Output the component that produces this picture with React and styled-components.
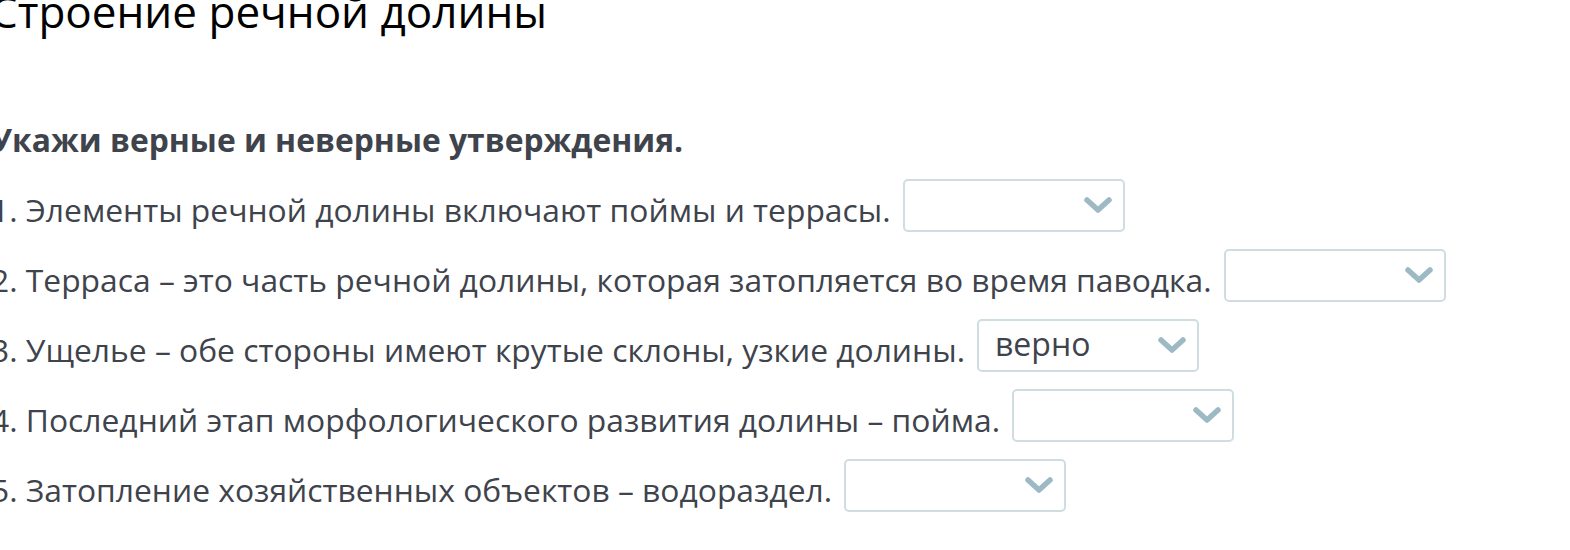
import React from "react";
import styled, { createGlobalStyle } from "styled-components";

const Global = createGlobalStyle`
  html, body { margin: 0; padding: 0; background: #ffffff; }
  body { font-family: "Open Sans", "Noto Sans", sans-serif; }
`;

const Page = styled.div`
  width: 1580px;
  height: 550px;
  overflow: hidden;
  margin-left: -9px;
`;

const Title = styled.h1`
  margin: -19px 0 0 -1px;
  font-size: 44px;
  font-weight: 400;
  line-height: 60px;
  color: #000;
`;

const Heading = styled.div`
  margin-top: 77px;
  font-size: 31.8px;
  font-weight: 700;
  line-height: 44px;
  color: #3e434c;
`;

const List = styled.div`
  display: flex;
  flex-direction: column;
  margin-top: 8px;
`;

const Row = styled.div`
  display: flex;
  align-items: center;
  height: 70px;
  font-size: 31.8px;
  color: #3e434c;
  white-space: nowrap;
`;

const Label = styled.span`
  padding-top: 9px;
`;

const Select = styled.div`
  box-sizing: border-box;
  margin-left: 12px;
  width: 222px;
  height: 53px;
  border: 2px solid #cfdde2;
  border-radius: 5px;
  display: flex;
  align-items: center;
  justify-content: space-between;
  padding: 0 10px 0 16px;
  font-size: 32px;
  color: #3e434c;
`;

const Value = styled.span`
  padding-bottom: 4px;
`;

const Chevron = () => (
  <svg width="30" height="20" viewBox="0 0 30 20">
    <path d="M4 5 L15 15 L26 5" fill="none" stroke="#9dbac4" strokeWidth="5.5" strokeLinecap="round" strokeLinejoin="round" />
  </svg>
);

const items = [
  { text: "1. Элементы речной долины включают поймы и террасы.", value: "" },
  { text: "2. Терраса – это часть речной долины, которая затопляется во время паводка.", value: "" },
  { text: "3. Ущелье – обе стороны имеют крутые склоны, узкие долины.", value: "верно" },
  { text: "4. Последний этап морфологического развития долины – пойма.", value: "" },
  { text: "5. Затопление хозяйственных объектов – водораздел.", value: "" },
];

export default function App() {
  return (
    <Page>
      <Global />
      <Title>Строение речной долины</Title>
      <Heading>Укажи верные и неверные утверждения.</Heading>
      <List>
        {items.map((it, i) => (
          <Row key={i}>
            <Label>{it.text}</Label>
            <Select>
              <Value>{it.value}</Value>
              <Chevron />
            </Select>
          </Row>
        ))}
      </List>
    </Page>
  );
}
